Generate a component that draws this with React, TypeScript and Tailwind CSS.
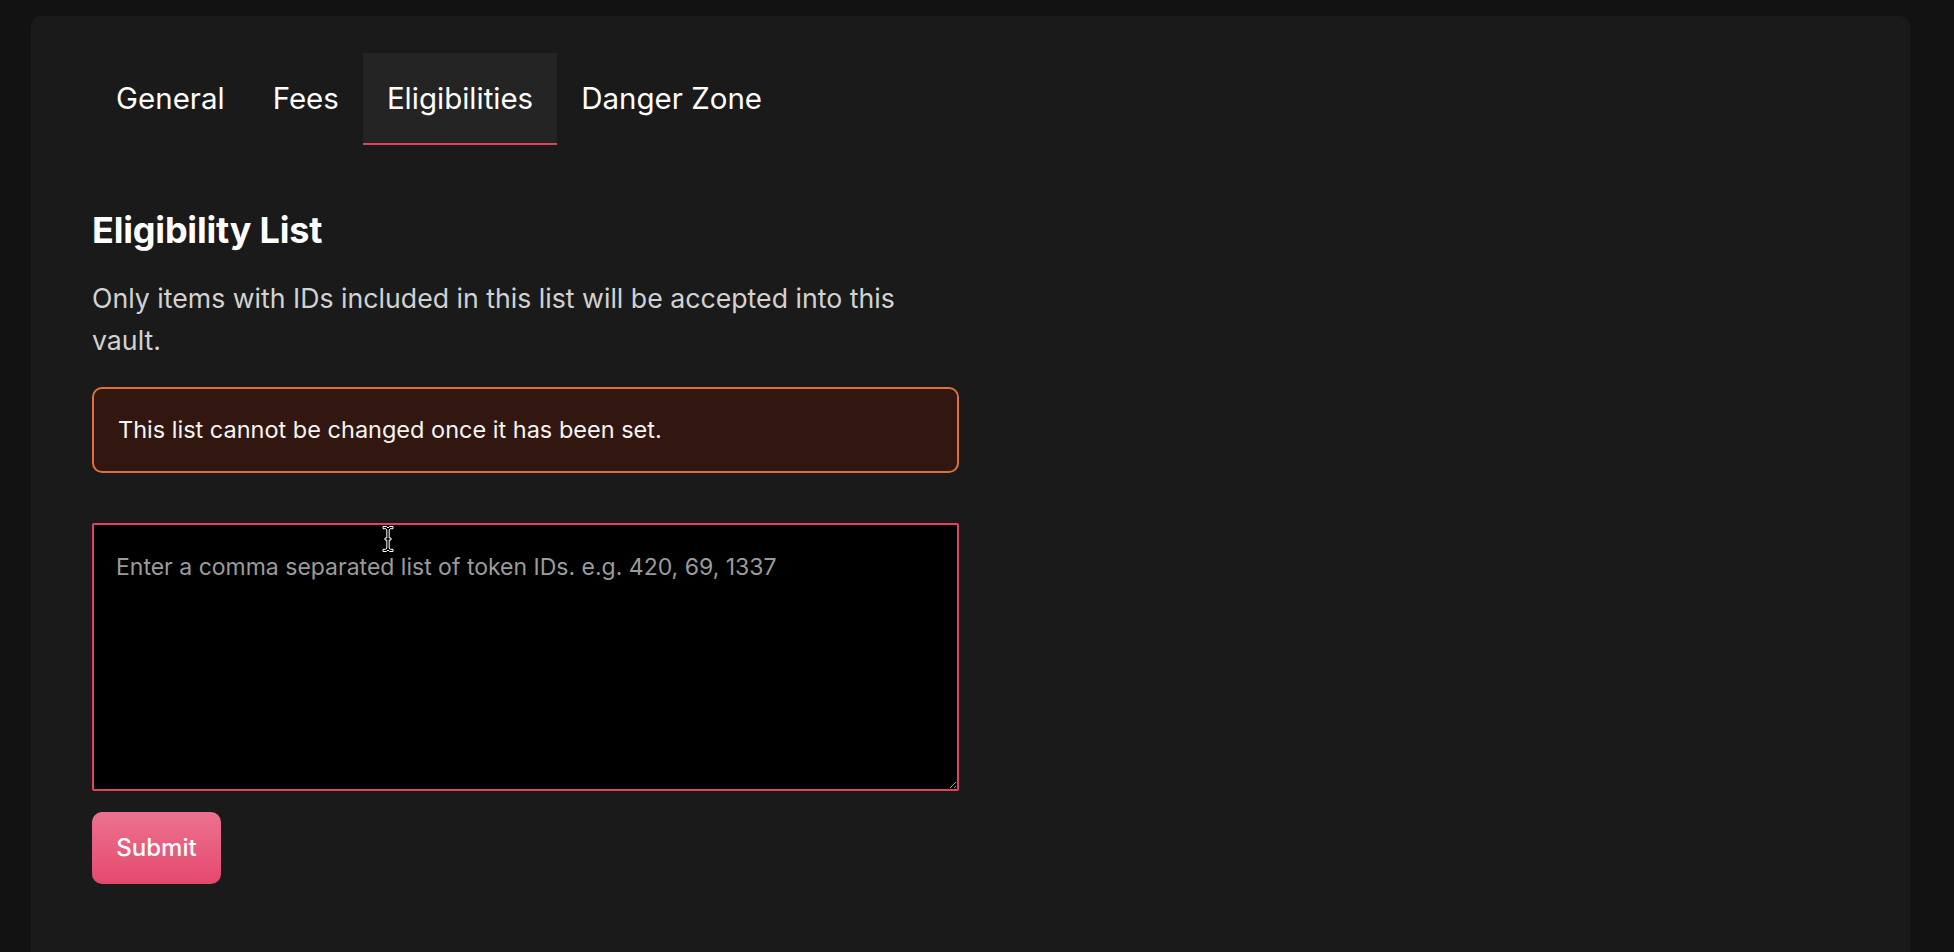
import { useState } from "react";

const tabs = ["General", "Fees", "Eligibilities", "Danger Zone"];

function IBeam() {
  return (
    <svg
      className="pointer-events-none absolute left-[381px] top-[525px]"
      width="14"
      height="28"
      viewBox="0 0 14 28"
    >
      <path
        d="M2 1.5h3.5L7 3l1.5-1.5H12v2.2H9.2L8.2 5v8h1.8v2H8.2v8l1 1.3H12v2.2H8.5L7 25l-1.5 1.5H2v-2.2h2.8l1-1.3v-8H4v-2h1.8V5l-1-1.3H2z"
        fill="#000"
        stroke="#fff"
        strokeWidth="1"
      />
    </svg>
  );
}

export default function App() {
  const [active, setActive] = useState("Eligibilities");

  return (
    <div className="relative min-h-screen bg-[#121212] pl-[31px] pr-[44px] pt-4 font-['Inter',sans-serif] text-white">
      <div className="min-h-[936px] rounded-t-[10px] bg-[#1a1a1a] px-[61px] pt-[37px]">
        <div className="flex">
          {tabs.map((t) => (
            <button
              key={t}
              onClick={() => setActive(t)}
              className={
                active === t
                  ? "border-b-2 border-[#e0415e] bg-[#242424] px-6 py-[27px] text-[29.5px] leading-[36px] text-white"
                  : "border-b-2 border-transparent px-6 py-[27px] text-[29.5px] leading-[36px] text-white"
              }
            >
              {t}
            </button>
          ))}
        </div>

        <div className="max-w-[867px]">
          <h2 className="mt-[63px] text-[36px] font-bold leading-[44px] tracking-[-0.2px]">
            Eligibility List
          </h2>
          <p className="mt-[25px] pr-[20px] text-[26.7px] leading-[42px] text-[#d2d2d2]">
            Only items with IDs included in this list will be accepted into this vault.
          </p>

          <div className="mt-[26px] flex h-[86px] items-center rounded-[10px] border-2 border-[#e0703b] bg-[#321710] px-[24px] text-[23.5px] text-[#f5f5f5]">
            This list cannot be changed once it has been set.
          </div>

          <textarea
            className="mt-[50px] block h-[268px] w-full rounded-[2px] border-2 border-[#e0415e] bg-black px-[22px] pt-[27px] text-[23px] leading-[30px] text-white outline-none placeholder:text-[#9b9b9b]"
            placeholder="Enter a comma separated list of token IDs. e.g. 420, 69, 1337"
          />

          <button className="mt-[21px] h-[72px] w-[129px] rounded-[10px] bg-gradient-to-b from-[#ed7190] to-[#e3486d] text-[24px] font-medium text-white">
            Submit
          </button>
        </div>
      </div>
      <IBeam />
    </div>
  );
}
